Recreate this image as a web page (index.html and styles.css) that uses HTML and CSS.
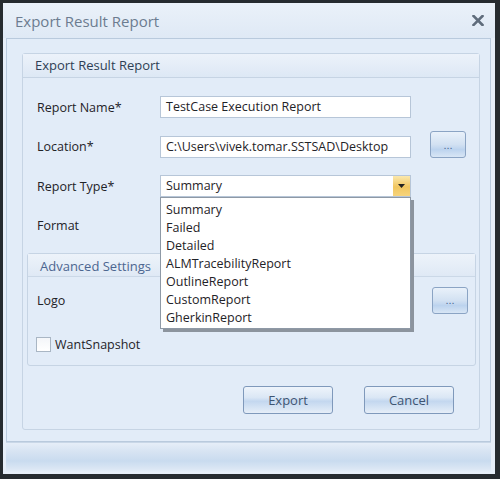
FILE: index.html
```html
<!DOCTYPE html>
<html lang="en">
<head>
    <meta charset="UTF-8">
    <title>Export Result Report</title>
    <link rel="stylesheet" href="styles.css">
</head>
<body>
    <div class="frame">
        <div class="window">
            <div class="titlebar">
                <span class="title">Export Result Report</span>
                <svg class="close" width="12" height="11" viewBox="0 0 12 11">
                    <path d="M1.5 1 L10.5 10 M10.5 1 L1.5 10" stroke="#5f6c7b" stroke-width="2.6" stroke-linecap="square"/>
                </svg>
            </div>

            <div class="content">
                <div class="group">
                    <div class="group-head">Export Result Report</div>

                    <div class="form">
                        <label>Report Name*</label>
                        <div class="field">TestCase Execution Report</div>
                        <div></div>

                        <label>Location*</label>
                        <div class="field">C:\Users\vivek.tomar.SSTSAD\Desktop</div>
                        <button class="dots">...</button>

                        <label>Report Type*</label>
                        <div class="field combo">
                            <span>Summary</span>
                            <span class="arrow"><svg width="7" height="4" viewBox="0 0 7 4"><path d="M0 0 H7 L3.5 4 Z" fill="#222"/></svg></span>
                            <ul class="list">
                                <li>Summary</li>
                                <li>Failed</li>
                                <li>Detailed</li>
                                <li>ALMTracebilityReport</li>
                                <li>OutlineReport</li>
                                <li>CustomReport</li>
                                <li>GherkinReport</li>
                            </ul>
                        </div>
                        <div></div>

                        <label>Format</label>
                        <div></div>
                        <div></div>
                    </div>

                    <div class="advanced">
                        <div class="adv-head">Advanced Settings</div>
                        <div class="logo-row">
                            <label>Logo</label>
                            <button class="dots">...</button>
                        </div>
                        <div class="check-row">
                            <span class="box"></span>
                            <span>WantSnapshot</span>
                        </div>
                    </div>

                    <div class="actions">
                        <button class="btn">Export</button>
                        <button class="btn">Cancel</button>
                    </div>
                </div>
            </div>

            <div class="bottombar"></div>
        </div>
    </div>
</body>
</html>
```

FILE: styles.css
```css
body {
    margin: 0;
    background-color: #262b2f;
    font-family: "Open Sans", "Noto Sans", sans-serif;
    font-size: 12px;
    color: #1f2328;
}

.frame {
    width: 500px;
    height: 479px;
    padding: 3px 5px 5px 3px;
    box-sizing: border-box;
}

.window {
    height: 100%;
    background-color: #e6eef8;
    display: flex;
    flex-direction: column;
}

.titlebar {
    height: 35px;
    display: flex;
    align-items: center;
    justify-content: space-between;
    padding: 0 11px 0 12px;
    background: linear-gradient(#eaf1f9, #dfe9f5);
}

.title {
    font-size: 15px;
    color: #6c7c90;
}

.content {
    flex: 1;
    margin: 0 4px 0 3px;
    border: 1px solid #b9cadd;
    background-color: #e2ecf8;
    padding: 14px 10px 0 15px;
}

.group {
    height: 377px;
    border: 1px solid #c6d4e4;
    border-radius: 3px;
    box-sizing: border-box;
    display: flex;
    flex-direction: column;
}

.group-head {
    height: 23px;
    line-height: 23px;
    padding-left: 12px;
    font-size: 13px;
    color: #2e3f55;
    border-bottom: 1px solid #c6d4e4;
    background: linear-gradient(#ecf2fa, #dde8f5);
}

.form {
    display: grid;
    grid-template-columns: 123px 251px 36px;
    grid-auto-rows: 22px;
    row-gap: 17.5px;
    column-gap: 19px;
    column-gap: 0;
    margin: 18px 0 0 14px;
    align-items: center;
}

.form .dots {
    margin-left: 19px;
    margin-top: -4px;
}

label {
    font-size: 12.5px;
}

.field {
    height: 22px;
    box-sizing: border-box;
    border: 1px solid #b7c6d8;
    background-color: #fff;
    padding-left: 5px;
    line-height: 20px;
    font-size: 12.5px;
    white-space: nowrap;
}

.combo {
    position: relative;
    display: flex;
    justify-content: space-between;
    padding-right: 0;
}

.arrow {
    width: 17px;
    display: flex;
    align-items: center;
    justify-content: center;
    background: linear-gradient(#fbe8ad, #f1c65f 55%, #f6d47c);
}

.list {
    position: absolute;
    top: 21px;
    left: -1px;
    width: 251px;
    margin: 0;
    padding: 3px 0 1px;
    list-style: none;
    background-color: #fff;
    border: 1px solid #8e99a6;
    box-sizing: border-box;
    box-shadow: 3px 3px 0 #8c949e;
    z-index: 2;
}

.list li {
    height: 18px;
    line-height: 18px;
    padding-left: 5px;
    font-size: 12.5px;
}

.dots {
    width: 36px;
    height: 27px;
    padding: 0;
    border: 1px solid #8ba4c4;
    border-radius: 3px;
    background: linear-gradient(#e9f1fa, #d2e1f2 50%, #bcd3ee 70%, #d8e6f5);
    color: #4a6a92;
    font-size: 11px;
    line-height: 20px;
}

.advanced {
    margin: 16px 3px 0 4px;
    height: 113px;
    border: 1px solid #c6d4e4;
    border-radius: 3px;
    box-sizing: border-box;
}

.adv-head {
    height: 22px;
    line-height: 24px;
    padding-left: 12px;
    font-size: 13px;
    color: #4c6690;
    border-bottom: 1px solid #cbd8e7;
    background: linear-gradient(#edf3fa, #dfe9f5);
}

.logo-row {
    display: flex;
    justify-content: space-between;
    align-items: center;
    margin: 10px 7px 0 9px;
}

.check-row {
    display: flex;
    align-items: center;
    gap: 4px;
    margin: 22px 0 0 8px;
    font-size: 12.5px;
}

.box {
    width: 13px;
    height: 13px;
    border: 1px solid #a9b6c4;
    background: linear-gradient(#f4f6f9, #ffffff);
}

.actions {
    display: flex;
    justify-content: flex-end;
    gap: 31px;
    margin: 20px 25px 0 0;
}

.btn {
    width: 90px;
    height: 28px;
    border: 1px solid #7f99bb;
    border-radius: 3px;
    background: linear-gradient(#eef4fb, #dbe7f5 40%, #c3d7ef 55%, #d6e4f4 80%, #e6eef8);
    color: #3d5472;
    font-family: "Open Sans", "Noto Sans", sans-serif;
    font-size: 13px;
}

.bottombar {
    height: 30px;
    margin: 0 4px 1px 3px;
    border-top: 1px solid #c9d7e7;
    background: linear-gradient(#e6eef8, #d6e3f2 30%, #c9dbef 60%, #dae6f4 85%, #e9f0f8);
}
```
